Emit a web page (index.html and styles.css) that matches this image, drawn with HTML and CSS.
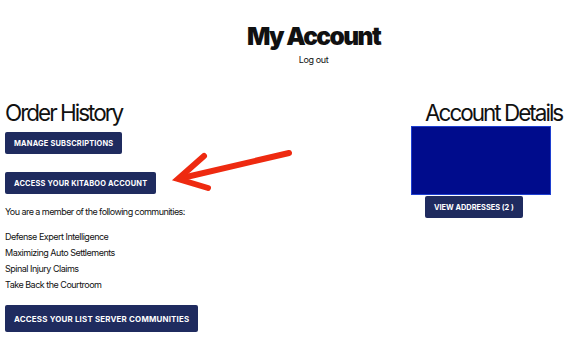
FILE: index.html
```html
<!DOCTYPE html>
<html lang="en">
<head>
  <meta charset="UTF-8">
  <meta name="viewport" content="width=device-width, initial-scale=1.0">
  <title>My Account</title>
  <link rel="stylesheet" href="styles.css">
</head>
<body>
  <div class="page">
    <header class="page-header">
      <h1>My Account</h1>
      <a href="#" class="logout">Log out</a>
    </header>

    <div class="columns">
      <section class="orders">
        <h2>Order History</h2>
        <a href="#" class="btn">Manage Subscriptions</a>
        <a href="#" class="btn">Access your Kitaboo Account</a>
        <p class="member-note">You are a member of the following communities:</p>
        <ul class="communities">
          <li>Defense Expert Intelligence</li>
          <li>Maximizing Auto Settlements</li>
          <li>Spinal Injury Claims</li>
          <li>Take Back the Courtroom</li>
        </ul>
        <a href="#" class="btn btn-large">Access your List Server Communities</a>
      </section>

      <section class="details">
        <h2>Account Details</h2>
        <div class="details-box"></div>
        <a href="#" class="btn">View Addresses (2 )</a>
      </section>
    </div>

    <svg class="arrow" width="130" height="50" viewBox="0 0 130 50">
      <path d="M119 8 L12 33" stroke="#ee2a10" stroke-width="6" stroke-linecap="round" fill="none"/>
      <path d="M34 11 L8 34 L38 43" stroke="#ee2a10" stroke-width="6" stroke-linecap="round" stroke-linejoin="miter" fill="none"/>
    </svg>
  </div>
</body>
</html>
```

FILE: styles.css
```css
:root {
  --navy: #1f2b5f;
  --text-color: #111;
}

body {
  margin: 0;
  font-family: Inter, 'Noto Sans', sans-serif;
  color: var(--text-color);
  background: #fff;
}

.page {
  position: relative;
  width: 577px;
  height: 341px;
  overflow: hidden;
}

.page-header {
  padding: 24px 0 0 50px;
  text-align: center;
}

h1 {
  margin: 0;
  font-size: 24.5px;
  line-height: 25px;
  font-weight: 900;
  letter-spacing: -1.6px;
}

.logout {
  display: block;
  margin-top: 6px;
  font-size: 9px;
  line-height: 9px;
  color: var(--text-color);
  text-decoration: none;
  letter-spacing: -0.4px;
}

.columns {
  display: flex;
  justify-content: space-between;
  padding: 37px 14px 0 5px;
}

h2 {
  margin: 0;
  font-size: 22.5px;
  line-height: 23px;
  font-weight: 400;
  letter-spacing: -2px;
  white-space: nowrap;
}

.btn {
  display: flex;
  align-items: center;
  width: max-content;
  height: 22px;
  padding: 0 9px;
  background-color: var(--navy);
  color: #fff;
  border-radius: 2px;
  font-size: 7.4px;
  font-weight: 700;
  text-transform: uppercase;
  text-decoration: none;
  letter-spacing: 0.2px;
}

.orders .btn {
  margin-top: 8px;
}

.orders .btn + .btn {
  margin-top: 18px;
}

.member-note {
  margin: 10px 0 0;
  font-size: 9px;
  line-height: 16px;
  letter-spacing: -0.55px;
}

.communities {
  list-style: none;
  margin: 9px 0 0;
  padding: 0;
  font-size: 9px;
  line-height: 16px;
  letter-spacing: -0.5px;
}

.orders .btn-large {
  margin-top: 12px;
  height: 27px;
  font-size: 7.9px;
}

.details {
  width: 152px;
}

.details h2 {
  padding-left: 14px;
}

.details-box {
  width: 138px;
  height: 67px;
  margin-top: 2px;
  background-color: #000c8c;
  border: 1px solid #1e3fd0;
}

.details .btn {
  margin: 1px 0 0 14px;
  letter-spacing: 0;
}

.arrow {
  position: absolute;
  left: 170px;
  top: 145px;
}
```
